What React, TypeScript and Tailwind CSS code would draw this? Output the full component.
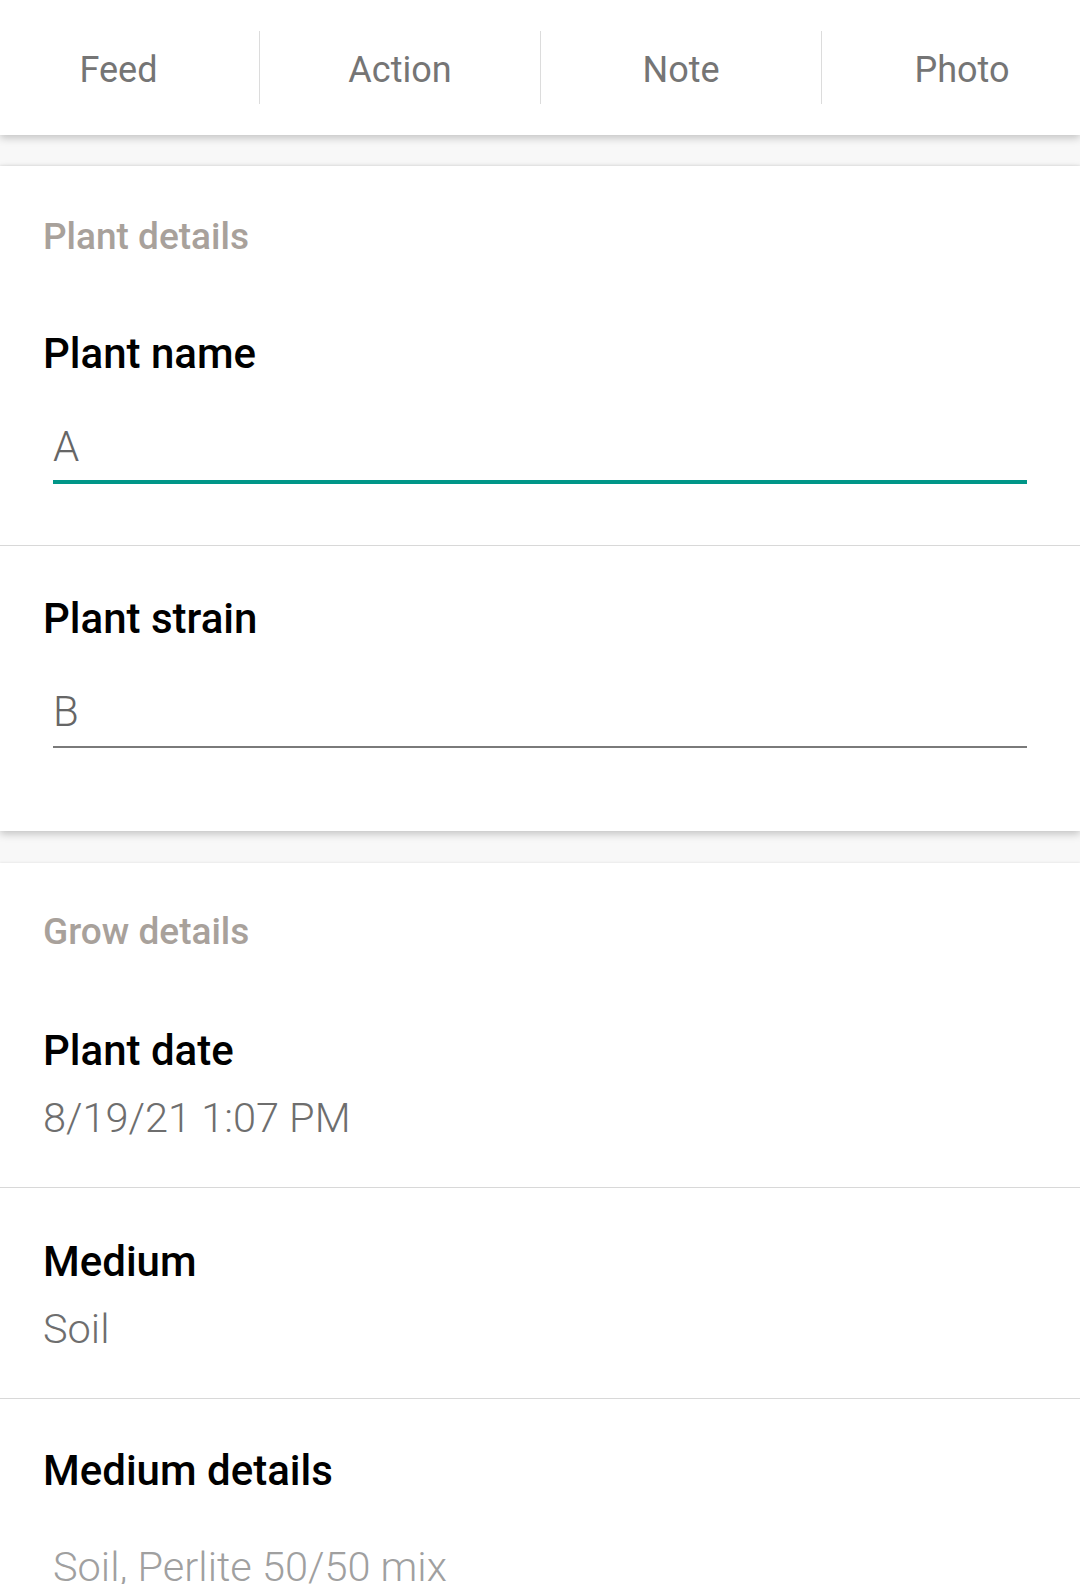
const tabs = ["Feed", "Action", "Note", "Photo"];

function SectionTitle({ children }: { children: React.ReactNode }) {
  return (
    <div className="text-[37px] leading-[50px] font-medium text-[#a8a19b]">
      {children}
    </div>
  );
}

function Label({ children }: { children: React.ReactNode }) {
  return (
    <div className="text-[42px] leading-[50px] font-medium text-black">
      {children}
    </div>
  );
}

function Value({ children }: { children: React.ReactNode }) {
  return (
    <div className="mt-[17px] text-[41.5px] leading-[50px] font-light text-[#6e6e6e]">
      {children}
    </div>
  );
}

function Input({ value, focused }: { value: string; focused?: boolean }) {
  return (
    <div className="mt-[43px] px-[10px]">
      <div className="text-[42px] leading-[50px] font-light text-[#666]">{value}</div>
      {focused ? (
        <div className="mt-[8px] h-[4px] bg-[#009688]" />
      ) : (
        <div className="mt-[9px] h-[2px] bg-[#7a7a7a]" />
      )}
    </div>
  );
}

function Divider() {
  return <div className="h-px bg-[#d8d8d8]" />;
}

export default function App() {
  return (
    <div className="w-[1080px] h-[1584px] overflow-hidden bg-[#f8f8f8] font-['Roboto','Liberation_Sans',sans-serif]">
      {/* tab strip, scrolled a little to the right */}
      <div className="relative z-10 h-[135px] bg-white shadow-[0_3px_8px_rgba(0,0,0,0.22)]">
        <div className="flex h-full -ml-[22px]">
          {tabs.map((t, i) => (
            <div key={t} className="flex h-full w-[281px] shrink-0 items-center">
              {i > 0 && <div className="h-[73px] w-px bg-[#dcdcdc]" />}
              <div className="flex-1 pt-[4px] text-center text-[36px] text-[#757575]">{t}</div>
            </div>
          ))}
        </div>
      </div>

      {/* plant details */}
      <div className="mt-[31px] bg-white shadow-[0_-1px_2px_rgba(0,0,0,0.06),0_3px_8px_rgba(0,0,0,0.22)]">
        <div className="px-[43px] pt-[46px]">
          <SectionTitle>Plant details</SectionTitle>
          <div className="mt-[67px]">
            <Label>Plant name</Label>
          </div>
          <Input value="A" focused />
        </div>
        <div className="mt-[61px]">
          <Divider />
        </div>
        <div className="px-[43px] pt-[48px] pb-[83px]">
          <Label>Plant strain</Label>
          <Input value="B" />
        </div>
      </div>

      {/* grow details */}
      <div className="mt-[32px] bg-white shadow-[0_-1px_2px_rgba(0,0,0,0.06)]">
        <div className="px-[43px] pt-[44px] pb-[44px]">
          <SectionTitle>Grow details</SectionTitle>
          <div className="mt-[69px]">
            <Label>Plant date</Label>
          </div>
          <Value>8/19/21 1:07 PM</Value>
        </div>
        <Divider />
        <div className="px-[43px] pt-[49px] pb-[44px]">
          <Label>Medium</Label>
          <Value>Soil</Value>
        </div>
        <Divider />
        <div className="px-[43px] pt-[47px]">
          <Label>Medium details</Label>
          <div className="mt-[46px] px-[10px] text-[41.5px] leading-[50px] font-light text-[#a0a0a0]">
            Soil, Perlite 50/50 mix
          </div>
        </div>
      </div>
    </div>
  );
}
